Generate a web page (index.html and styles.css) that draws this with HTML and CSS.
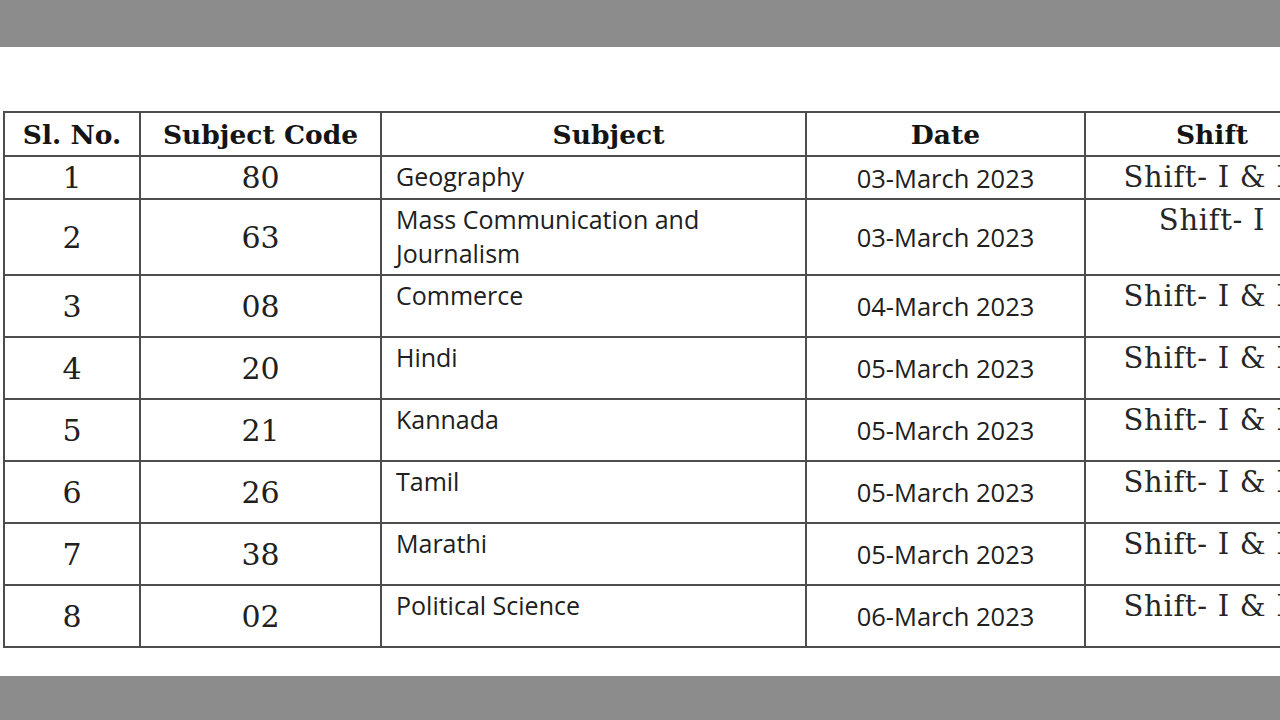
FILE: index.html
```html
<!DOCTYPE html>
<html>
<head>
<meta charset="utf-8">
<link rel="stylesheet" href="styles.css">
</head>
<body>
<div class="bar"></div>
<div class="sheet">
  <table class="sched">
    <colgroup>
      <col class="c1"><col class="c2"><col class="c3"><col class="c4"><col class="c5">
    </colgroup>
    <thead>
      <tr class="hrow">
        <th>Sl. No.</th><th>Subject Code</th><th class="hsubj">Subject</th><th>Date</th><th>Shift</th>
      </tr>
    </thead>
    <tbody>
      <tr class="r1">
        <td class="num">1</td><td class="num">80</td><td class="subj">Geography</td><td class="date">03-March 2023</td><td class="shift">Shift- I &amp; II</td>
      </tr>
      <tr class="r2">
        <td class="num">2</td><td class="num">63</td><td class="subj">Mass Communication and<br>Journalism</td><td class="date">03-March 2023</td><td class="shift">Shift- I</td>
      </tr>
      <tr class="rn">
        <td class="num">3</td><td class="num">08</td><td class="subj">Commerce</td><td class="date">04-March 2023</td><td class="shift">Shift- I &amp; II</td>
      </tr>
      <tr class="rn">
        <td class="num">4</td><td class="num">20</td><td class="subj">Hindi</td><td class="date">05-March 2023</td><td class="shift">Shift- I &amp; II</td>
      </tr>
      <tr class="rn">
        <td class="num">5</td><td class="num">21</td><td class="subj">Kannada</td><td class="date">05-March 2023</td><td class="shift">Shift- I &amp; II</td>
      </tr>
      <tr class="rn">
        <td class="num">6</td><td class="num">26</td><td class="subj">Tamil</td><td class="date">05-March 2023</td><td class="shift">Shift- I &amp; II</td>
      </tr>
      <tr class="rn">
        <td class="num">7</td><td class="num">38</td><td class="subj">Marathi</td><td class="date">05-March 2023</td><td class="shift">Shift- I &amp; II</td>
      </tr>
      <tr class="rn">
        <td class="num">8</td><td class="num">02</td><td class="subj">Political Science</td><td class="date">06-March 2023</td><td class="shift">Shift- I &amp; II</td>
      </tr>
    </tbody>
  </table>
</div>
<div class="bar bottom"></div>
</body>
</html>
```

FILE: styles.css
```css
html, body {
  margin: 0;
  padding: 0;
}
body {
  width: 1280px;
  height: 720px;
  overflow: hidden;
  background: #ffffff;
  display: flex;
  flex-direction: column;
}
.bar {
  height: 47px;
  background: #8c8c8c;
  flex: none;
}
.bar.bottom {
  height: 44px;
}
.sheet {
  flex: 1;
  padding: 64px 0 0 3px;
  overflow: hidden;
}
.sched {
  border-collapse: collapse;
  table-layout: fixed;
  width: 1335px;
  color: #202020;
}
.sched col.c1 { width: 136px; }
.sched col.c2 { width: 241px; }
.sched col.c3 { width: 425px; }
.sched col.c4 { width: 279px; }
.sched col.c5 { width: 254px; }
.sched th, .sched td {
  border: 2px solid #4d4d4d;
  padding: 0;
  white-space: nowrap;
}
.sched th {
  font-family: "DejaVu Serif", serif;
  font-weight: bold;
  font-size: 26.5px;
  text-align: center;
  height: 42px;
  color: #141414;
}
.sched th.hsubj {
  padding-left: 30px;
}
.r1 .num { height: 41px; }
.r2 .num { height: 74px; }
.rn .num { height: 60px; }
.num {
  font-family: "DejaVu Serif", serif;
  font-size: 30px;
  text-align: center;
  vertical-align: middle;
}
.subj {
  font-family: "Open Sans", sans-serif;
  font-size: 25px;
  line-height: 34px;
  text-align: left;
  vertical-align: top;
  padding-left: 14px !important;
  padding-top: 2px !important;
}
.date {
  font-family: "Open Sans", sans-serif;
  font-size: 25.5px;
  text-align: center;
  vertical-align: middle;
}
.shift {
  font-family: "DejaVu Serif", serif;
  font-size: 29px;
  letter-spacing: 0.7px;
  line-height: 34px;
  vertical-align: top;
  text-align: center;
  padding-top: 3px !important;
  color: #262626;
}
```
